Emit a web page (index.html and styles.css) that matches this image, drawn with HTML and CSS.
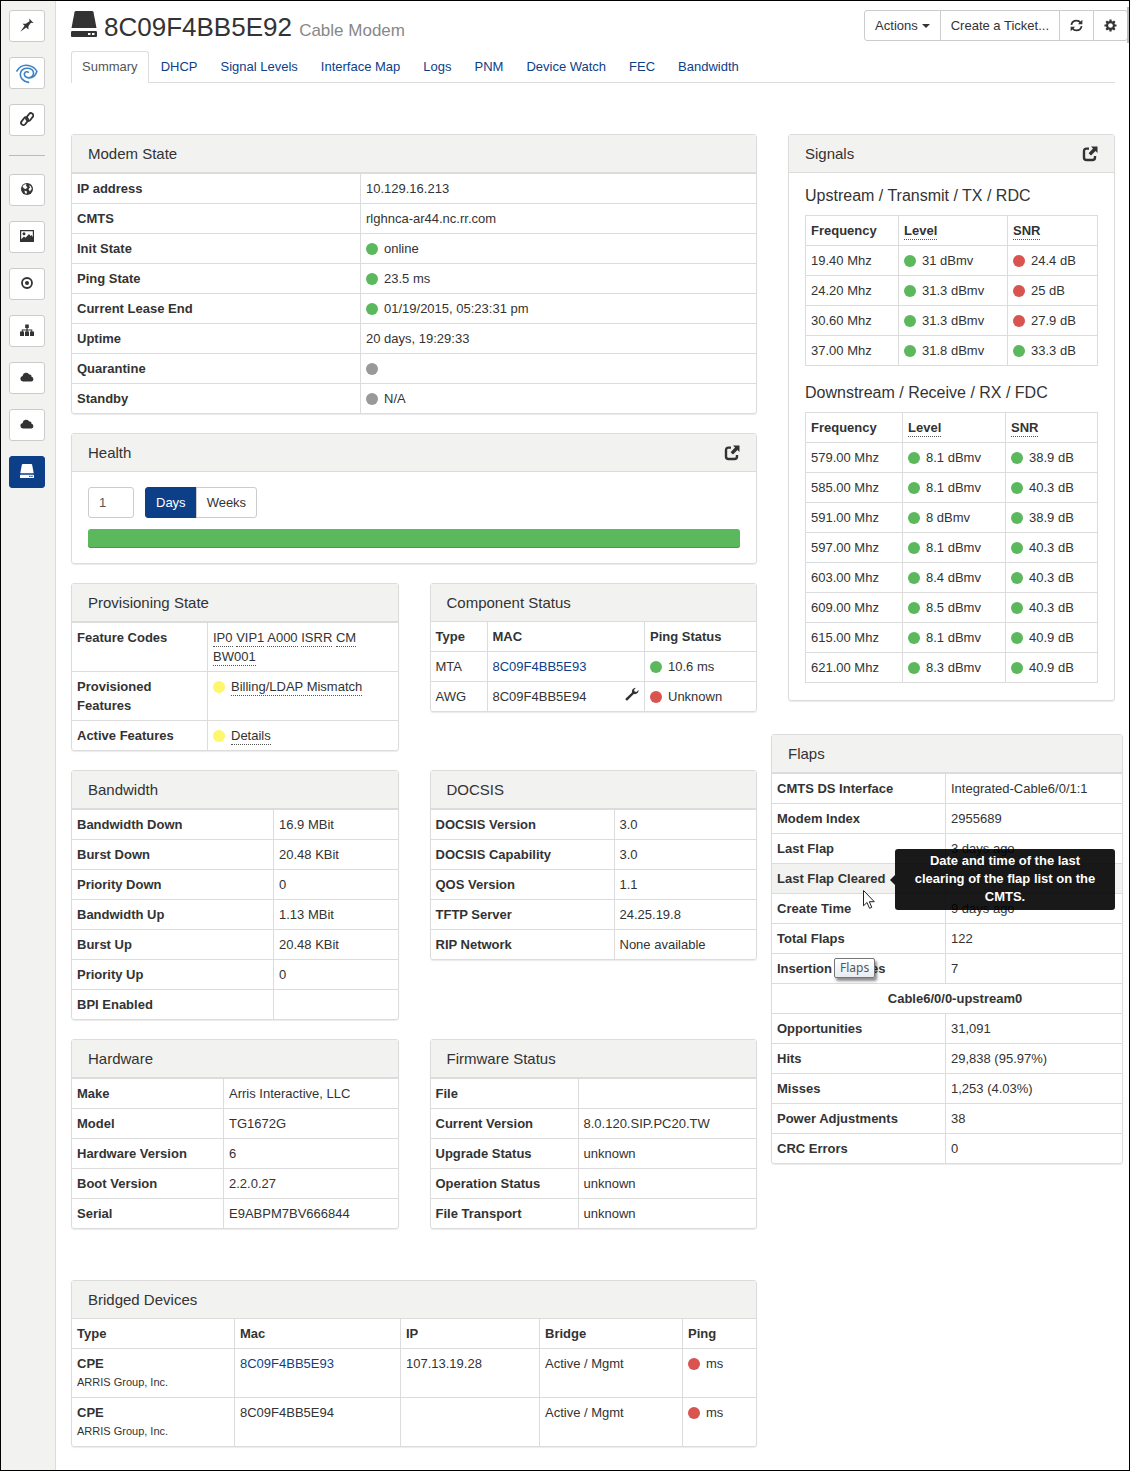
FILE: index.html
```html
<!DOCTYPE html>
<html lang="en">
<head>
<meta charset="utf-8">
<title>8C09F4BB5E92 - Cable Modem</title>
<link rel="stylesheet" href="styles.css">
</head>
<body>
<svg class="defs" aria-hidden="true">
  <symbol id="i-hdd" viewBox="0 0 26 26"><path d="M5 0h16q1.200 0 1.500 1.200L25.500 17H.5L3.500 1.200Q3.800 0 5 0z"/><path fill-rule="evenodd" d="M1.200 20h23.600q1.200 0 1.200 1.200V25q0 1-1 1H1q-1 0-1-1v-3.800Q0 20 1.200 20zM17 22v2h2.500v-2zM21 22v2h2.500v-2z"/></symbol>
  <symbol id="i-pin" viewBox="0 0 14 14"><path d="M.3 13.700L4.600 7.800 2.600 5.700h3.200L9.500 3.200 9.200.6l4.300 4.300-2.600-.2-2.500 3.500v3.200L6.200 9.400z"/></symbol>
  <symbol id="i-swirl" viewBox="0 0 22 20"><path fill="none" stroke="currentColor" stroke-width="1.600" stroke-linecap="round" d="M.9 7C4 1.800 9 .8 12.500 1.500 17 2.500 19.700 5 20.900 7.500 19.500 11.800 16 14.200 12.300 13.900M12.500 18.400C7 17.500 3.800 13.500 4.400 9.600 5 5.800 8.600 4.200 12 4.300c3.800.2 5.800 2.700 5.500 5.300-.4 2.900-3.200 4.500-5.800 4-2.600-.6-3.800-2.500-3.200-4.200.6-1.600 2.600-2.200 3.800-1.200"/></symbol>
  <symbol id="i-link" viewBox="0 0 14 14"><g fill="none" stroke="currentColor" stroke-width="1.800" transform="rotate(-52 7 7)"><rect x="-.5" y="4.200" width="8.500" height="4.600" rx="2.300"/><rect x="6" y="5.600" width="8.500" height="4.600" rx="2.300"/></g></symbol>
  <symbol id="i-globe" viewBox="0 0 14 14"><circle cx="7" cy="7" r="6"/><path fill="#fff" d="M2.500 4.500C3.500 2.800 5 2.200 6.500 2.300L6 4l1.500 1L6 7 4 6.500zM9 3l2 1.500.8 2.500-2 2.500L8.500 7 10 5.500zM4.500 8.500L7 9.500 6.500 12 5 11z"/></symbol>
  <symbol id="i-image" viewBox="0 0 14 14"><path fill-rule="evenodd" d="M0 1h14v12H0zM1.200 2.200v8L4 7.500l1.500 1.300L9 5l1.500 2 1-1L12.800 8V2.200zM4 3.300a1.500 1.500 0 1 1 0 3 1.500 1.500 0 0 1 0-3z"/></symbol>
  <symbol id="i-target" viewBox="0 0 14 14"><circle cx="7" cy="7" r="5" fill="none" stroke="currentColor" stroke-width="1.800"/><circle cx="7" cy="7" r="2"/></symbol>
  <symbol id="i-sitemap" viewBox="0 0 14 14"><path d="M5.200 1.500h3.600V5H7.600v1.500h4.700v2H14V13h-4V8.500h1.200v-1H7.600v1H9V13H5V8.500h1.400v-1H2.800v1H4V13H0V8.500h1.700v-2h4.700V5H5.200z"/></symbol>
  <symbol id="i-cloud" viewBox="0 0 14 14"><path d="M3 11.500a3 2.800 0 0 1-.4-5.500 3.600 3.600 0 0 1 6.700-1.400 2 2 0 0 1 2.200 2.200A2.400 2.400 0 0 1 11.500 11.500z"/></symbol>
  <symbol id="i-refresh" viewBox="0 0 14 14"><path fill="none" stroke="currentColor" stroke-width="1.900" d="M1.500 6.300C2 3.300 4.300 1.700 7 1.700c2 0 3.400.9 4.300 2.200M12.500 7.700c-.5 3-2.800 4.600-5.500 4.600-2 0-3.400-.9-4.300-2.200"/><path d="M13.300.8v4.900H8.500zM.7 13.200V8.300h4.800z"/></symbol>
  <symbol id="i-gear" viewBox="0 0 14 14"><circle cx="7" cy="7" r="3.700" fill="none" stroke="currentColor" stroke-width="2.300"/><path fill="none" stroke="currentColor" stroke-width="2.400" d="M7 .5V3M7 11v2.500M.5 7H3M11 7h2.500M2.400 2.400l1.800 1.800M9.800 9.800l1.800 1.800M11.600 2.400L9.800 4.200M4.200 9.800l-1.800 1.800"/></symbol>
  <symbol id="i-open" viewBox="0 0 16 16"><path fill="none" stroke="currentColor" stroke-width="2.400" d="M7 2.600H4.600Q2 2.600 2 5.200v6.200Q2 14 4.600 14h5.800Q13 14 13 11.400V10"/><path d="M9 .5h6.500V7l-2-2L9 9.600 6.600 7.200 11 2.600z"/></symbol>
  <symbol id="i-wrench" viewBox="0 0 14 14"><path d="M.7 11.400L7 5.600C6.500 3.400 8 .9 10.900.8L9 2.900l.6 1.700 1.800.4 2.200-1.900c.2 2.800-2.200 4.500-4.800 4L2.600 13.200C1.300 14 0 12.500.7 11.400z"/></symbol>
</svg>

<nav class="sidebar" aria-label="Shortcuts">
  <button class="side-btn" aria-label="Pin"><svg><use href="#i-pin"/></svg></button>
  <button class="side-btn side-btn-logo" aria-label="Home"><svg><use href="#i-swirl"/></svg></button>
  <button class="side-btn" aria-label="Links"><svg><use href="#i-link"/></svg></button>
  <hr class="side-rule">
  <button class="side-btn" aria-label="World"><svg><use href="#i-globe"/></svg></button>
  <button class="side-btn" aria-label="Images"><svg><use href="#i-image"/></svg></button>
  <button class="side-btn" aria-label="Target"><svg><use href="#i-target"/></svg></button>
  <button class="side-btn" aria-label="Topology"><svg><use href="#i-sitemap"/></svg></button>
  <button class="side-btn" aria-label="Cloud"><svg><use href="#i-cloud"/></svg></button>
  <button class="side-btn" aria-label="Cloud network"><svg><use href="#i-cloud"/></svg></button>
  <button class="side-btn side-btn-active" aria-label="Modem"><svg><use href="#i-hdd"/></svg></button>
</nav>

<main class="main">
  <header class="header">
    <svg class="title-icon"><use href="#i-hdd"/></svg>
    <h1 class="title">8C09F4BB5E92 <small>Cable Modem</small></h1>
    <div class="btn-group toolbar">
      <button class="btn">Actions <span class="caret"></span></button>
      <button class="btn">Create a Ticket...</button>
      <button class="btn" aria-label="Refresh"><svg><use href="#i-refresh"/></svg></button>
      <button class="btn" aria-label="Settings"><svg><use href="#i-gear"/></svg></button>
    </div>
  </header>

  <nav class="tabs" aria-label="Sections">
    <a class="tab tab-active" href="#">Summary</a>
    <a class="tab" href="#">DHCP</a>
    <a class="tab" href="#">Signal Levels</a>
    <a class="tab" href="#">Interface Map</a>
    <a class="tab" href="#">Logs</a>
    <a class="tab" href="#">PNM</a>
    <a class="tab" href="#">Device Watch</a>
    <a class="tab" href="#">FEC</a>
    <a class="tab" href="#">Bandwidth</a>
  </nav>

  <div class="content">
    <div class="left">
      <section class="panel wide">
        <h2 class="panel-title">Modem State</h2>
        <table class="data">
          <colgroup><col class="w-modem"><col></colgroup>
          <tr><th scope="row">IP address</th><td>10.129.16.213</td></tr>
          <tr><th scope="row">CMTS</th><td>rlghnca-ar44.nc.rr.com</td></tr>
          <tr><th scope="row">Init State</th><td><i class="dot green"></i>online</td></tr>
          <tr><th scope="row">Ping State</th><td><i class="dot green"></i>23.5 ms</td></tr>
          <tr><th scope="row">Current Lease End</th><td><i class="dot green"></i>01/19/2015, 05:23:31 pm</td></tr>
          <tr><th scope="row">Uptime</th><td>20 days, 19:29:33</td></tr>
          <tr><th scope="row">Quarantine</th><td><i class="dot gray"></i></td></tr>
          <tr><th scope="row">Standby</th><td><i class="dot gray"></i>N/A</td></tr>
        </table>
      </section>

      <section class="panel wide">
        <h2 class="panel-title">Health <a class="open" href="#" aria-label="Open health"><svg><use href="#i-open"/></svg></a></h2>
        <div class="health">
          <div class="controls">
            <input class="count" type="text" value="1" aria-label="Number of periods">
            <div class="btn-group">
              <button class="btn btn-primary">Days</button>
              <button class="btn">Weeks</button>
            </div>
          </div>
          <div class="progress"></div>
        </div>
      </section>

      <section class="panel">
        <h2 class="panel-title">Provisioning State</h2>
        <table class="data">
          <colgroup><col class="w-prov"><col></colgroup>
          <tr><th scope="row">Feature Codes</th><td><abbr>IP0</abbr> <abbr>VIP1</abbr> <abbr>A000</abbr> <abbr>ISRR</abbr> <abbr>CM</abbr> <abbr>BW001</abbr></td></tr>
          <tr><th scope="row">Provisioned Features</th><td><i class="dot yellow"></i><abbr>Billing/LDAP Mismatch</abbr></td></tr>
          <tr><th scope="row">Active Features</th><td><i class="dot yellow"></i><abbr>Details</abbr></td></tr>
        </table>
      </section>

      <section class="panel">
        <h2 class="panel-title">Component Status</h2>
        <table class="data headed">
          <colgroup><col class="w-type"><col><col class="w-status"></colgroup>
          <thead><tr><th>Type</th><th>MAC</th><th>Ping Status</th></tr></thead>
          <tbody>
            <tr><td>MTA</td><td><a href="#">8C09F4BB5E93</a></td><td><i class="dot green"></i>10.6 ms</td></tr>
            <tr><td>AWG</td><td>8C09F4BB5E94<svg class="wrench"><use href="#i-wrench"/></svg></td><td><i class="dot red"></i>Unknown</td></tr>
          </tbody>
        </table>
      </section>

      <section class="panel">
        <h2 class="panel-title">Bandwidth</h2>
        <table class="data">
          <colgroup><col class="w-band"><col></colgroup>
          <tr><th scope="row">Bandwidth Down</th><td>16.9 MBit</td></tr>
          <tr><th scope="row">Burst Down</th><td>20.48 KBit</td></tr>
          <tr><th scope="row">Priority Down</th><td>0</td></tr>
          <tr><th scope="row">Bandwidth Up</th><td>1.13 MBit</td></tr>
          <tr><th scope="row">Burst Up</th><td>20.48 KBit</td></tr>
          <tr><th scope="row">Priority Up</th><td>0</td></tr>
          <tr><th scope="row">BPI Enabled</th><td></td></tr>
        </table>
      </section>

      <section class="panel">
        <h2 class="panel-title">DOCSIS</h2>
        <table class="data">
          <colgroup><col class="w-docsis"><col></colgroup>
          <tr><th scope="row">DOCSIS Version</th><td>3.0</td></tr>
          <tr><th scope="row">DOCSIS Capability</th><td>3.0</td></tr>
          <tr><th scope="row">QOS Version</th><td>1.1</td></tr>
          <tr><th scope="row">TFTP Server</th><td>24.25.19.8</td></tr>
          <tr><th scope="row">RIP Network</th><td>None available</td></tr>
        </table>
      </section>

      <section class="panel">
        <h2 class="panel-title">Hardware</h2>
        <table class="data">
          <colgroup><col class="w-hard"><col></colgroup>
          <tr><th scope="row">Make</th><td>Arris Interactive, LLC</td></tr>
          <tr><th scope="row">Model</th><td>TG1672G</td></tr>
          <tr><th scope="row">Hardware Version</th><td>6</td></tr>
          <tr><th scope="row">Boot Version</th><td>2.2.0.27</td></tr>
          <tr><th scope="row">Serial</th><td>E9ABPM7BV666844</td></tr>
        </table>
      </section>

      <section class="panel">
        <h2 class="panel-title">Firmware Status</h2>
        <table class="data">
          <colgroup><col class="w-firm"><col></colgroup>
          <tr><th scope="row">File</th><td></td></tr>
          <tr><th scope="row">Current Version</th><td>8.0.120.SIP.PC20.TW</td></tr>
          <tr><th scope="row">Upgrade Status</th><td>unknown</td></tr>
          <tr><th scope="row">Operation Status</th><td>unknown</td></tr>
          <tr><th scope="row">File Transport</th><td>unknown</td></tr>
        </table>
      </section>

      <section class="panel wide bridged">
        <h2 class="panel-title">Bridged Devices</h2>
        <table class="data headed">
          <colgroup><col class="w-b1"><col><col class="w-b3"><col class="w-b4"><col class="w-b5"></colgroup>
          <thead><tr><th>Type</th><th>Mac</th><th>IP</th><th>Bridge</th><th>Ping</th></tr></thead>
          <tbody>
            <tr><th scope="row">CPE<small>ARRIS Group, Inc.</small></th><td><a href="#">8C09F4BB5E93</a></td><td>107.13.19.28</td><td>Active / Mgmt</td><td><i class="dot red"></i>ms</td></tr>
            <tr><th scope="row">CPE<small>ARRIS Group, Inc.</small></th><td>8C09F4BB5E94</td><td></td><td>Active / Mgmt</td><td><i class="dot red"></i>ms</td></tr>
          </tbody>
        </table>
      </section>
    </div>

    <div class="right">
      <section class="panel">
        <h2 class="panel-title">Signals <a class="open" href="#" aria-label="Open signals"><svg><use href="#i-open"/></svg></a></h2>
        <div class="signals">
          <h3 class="subtitle">Upstream / Transmit / TX / RDC</h3>
          <table class="data boxed">
            <colgroup><col class="w-freq-up"><col><col class="w-snr-up"></colgroup>
            <thead><tr><th>Frequency</th><th><abbr>Level</abbr></th><th><abbr>SNR</abbr></th></tr></thead>
            <tbody>
              <tr><td>19.40 Mhz</td><td><i class="dot green"></i>31 dBmv</td><td><i class="dot red"></i>24.4 dB</td></tr>
              <tr><td>24.20 Mhz</td><td><i class="dot green"></i>31.3 dBmv</td><td><i class="dot red"></i>25 dB</td></tr>
              <tr><td>30.60 Mhz</td><td><i class="dot green"></i>31.3 dBmv</td><td><i class="dot red"></i>27.9 dB</td></tr>
              <tr><td>37.00 Mhz</td><td><i class="dot green"></i>31.8 dBmv</td><td><i class="dot green"></i>33.3 dB</td></tr>
            </tbody>
          </table>
          <h3 class="subtitle">Downstream / Receive / RX / FDC</h3>
          <table class="data boxed">
            <colgroup><col class="w-freq-down"><col><col class="w-snr-down"></colgroup>
            <thead><tr><th>Frequency</th><th><abbr>Level</abbr></th><th><abbr>SNR</abbr></th></tr></thead>
            <tbody>
              <tr><td>579.00 Mhz</td><td><i class="dot green"></i>8.1 dBmv</td><td><i class="dot green"></i>38.9 dB</td></tr>
              <tr><td>585.00 Mhz</td><td><i class="dot green"></i>8.1 dBmv</td><td><i class="dot green"></i>40.3 dB</td></tr>
              <tr><td>591.00 Mhz</td><td><i class="dot green"></i>8 dBmv</td><td><i class="dot green"></i>38.9 dB</td></tr>
              <tr><td>597.00 Mhz</td><td><i class="dot green"></i>8.1 dBmv</td><td><i class="dot green"></i>40.3 dB</td></tr>
              <tr><td>603.00 Mhz</td><td><i class="dot green"></i>8.4 dBmv</td><td><i class="dot green"></i>40.3 dB</td></tr>
              <tr><td>609.00 Mhz</td><td><i class="dot green"></i>8.5 dBmv</td><td><i class="dot green"></i>40.3 dB</td></tr>
              <tr><td>615.00 Mhz</td><td><i class="dot green"></i>8.1 dBmv</td><td><i class="dot green"></i>40.9 dB</td></tr>
              <tr><td>621.00 Mhz</td><td><i class="dot green"></i>8.3 dBmv</td><td><i class="dot green"></i>40.9 dB</td></tr>
            </tbody>
          </table>
        </div>
      </section>

      <section class="panel flaps">
        <h2 class="panel-title">Flaps</h2>
        <table class="data">
          <colgroup><col class="w-flaps"><col></colgroup>
          <tr><th scope="row">CMTS DS Interface</th><td>Integrated-Cable6/0/1:1</td></tr>
          <tr><th scope="row">Modem Index</th><td>2955689</td></tr>
          <tr><th scope="row">Last Flap</th><td>3 days ago</td></tr>
          <tr class="hovered"><th scope="row">Last Flap Cleared
            <span class="tooltip" role="tooltip">Date and time of the last clearing of the flap list on the CMTS.</span>
            <svg class="cursor" viewBox="0 0 12 19"><path fill="#fff" stroke="#222" d="M.5.5v15.300l3.500-3.300 2.500 5.800 2.300-1-2.500-5.600h5z"/></svg>
          </th><td></td></tr>
          <tr><th scope="row">Create Time</th><td>9 days ago</td></tr>
          <tr><th scope="row">Total Flaps</th><td>122</td></tr>
          <tr class="hinted"><th scope="row">Insertion Failures<span class="hint">Flaps</span></th><td>7</td></tr>
          <tr><th class="group" colspan="2">Cable6/0/0-upstream0</th></tr>
          <tr><th scope="row">Opportunities</th><td>31,091</td></tr>
          <tr><th scope="row">Hits</th><td>29,838 (95.97%)</td></tr>
          <tr><th scope="row">Misses</th><td>1,253 (4.03%)</td></tr>
          <tr><th scope="row">Power Adjustments</th><td>38</td></tr>
          <tr><th scope="row">CRC Errors</th><td>0</td></tr>
        </table>
      </section>
    </div>
  </div>
</main>
<div class="scroll-thumb"></div>
</body>
</html>
```

FILE: styles.css
```css
* { box-sizing: border-box; }

body {
  margin: 0;
  min-height: 100vh;
  display: flex;
  position: relative;
  border: 1px solid #000;
  background: #fff;
  color: #333;
  font: 13px/19px "Liberation Sans", Arial, sans-serif;
}

a { color: #0d3f88; text-decoration: none; }
button, input { font: inherit; color: inherit; }
svg { fill: currentColor; }
.defs { position: absolute; width: 0; height: 0; }

/* Sidebar */
.sidebar {
  flex: none;
  width: 55px;
  padding: 9px 8px;
  display: flex;
  flex-direction: column;
  gap: 15px;
  background: #f2f2f0;
  border-right: 1px solid #dcdcdc;
}
.side-btn {
  width: 36px;
  height: 32px;
  padding: 0 0 3px;
  display: flex;
  align-items: center;
  justify-content: center;
  background: #fff;
  border: 1px solid #ccc;
  border-radius: 3px;
}
.side-btn svg { width: 14px; height: 14px; }
.side-btn-logo { padding: 2px 0 0; color: #3f83c3; }
.side-btn-logo svg { width: 22px; height: 20px; }
.side-btn-active { background: #0d3f88; border-color: #0d3f88; color: #fff; }
.side-rule {
  width: 36px;
  margin: 4px 0 3px;
  border: 0;
  border-top: 1px solid #bbb;
}

/* Header */
.main { flex: 1; min-width: 0; padding: 9px 14px 22px 15px; }
.header {
  display: flex;
  align-items: flex-start;
  height: 41px;
  margin-right: -13px;
}
.title-icon { width: 26px; height: 26px; margin: 1px 7px 0 0; flex: none; }
.title {
  margin: 0;
  flex: 1;
  font-size: 26px;
  line-height: 34px;
  font-weight: 400;
}
.title small { font-size: 17px; color: #888; }

.btn-group { display: flex; }
.btn {
  height: 31px;
  padding: 0 10px;
  display: flex;
  align-items: center;
  gap: 4px;
  background: #fff;
  border: 1px solid #ccc;
}
.btn + .btn { margin-left: -1px; }
.btn:first-child { border-radius: 3px 0 0 3px; }
.btn:last-child { border-radius: 0 3px 3px 0; }
.btn svg { width: 13px; height: 13px; }
.btn-primary { background: #0d3f88; border-color: #0d3f88; color: #fff; }
.caret {
  border: 4px solid transparent;
  border-top-color: currentColor;
  border-bottom: 0;
}

/* Tabs */
.tabs {
  display: flex;
  gap: 1px;
  margin-bottom: 51px;
  border-bottom: 1px solid #ddd;
}
.tab {
  padding: 5px 10px 6px;
  border: 1px solid transparent;
  border-bottom: 0;
  border-radius: 3px 3px 0 0;
}
.tab-active {
  margin-bottom: -1px;
  background: #fff;
  border-color: #ddd;
  color: #555;
}

/* Panels */
.content {
  display: grid;
  grid-template-columns: minmax(0, 686fr) minmax(0, 327fr);
  gap: 31px;
  align-items: start;
}
.left {
  display: grid;
  grid-template-columns: repeat(2, minmax(0, 1fr));
  gap: 19px 31px;
  align-items: start;
}
.wide { grid-column: 1 / -1; }
.panel {
  border: 1px solid #dcdcdc;
  border-radius: 3px;
  box-shadow: 0 1px 1px rgba(0, 0, 0, .08);
}
.panel-title {
  display: flex;
  align-items: center;
  justify-content: space-between;
  height: 38px;
  margin: 0;
  padding: 0 16px;
  background: #f2f2f0;
  border-bottom: 1px solid #dcdcdc;
  font-size: 15px;
  font-weight: 400;
}
.open { color: #333; height: 16px; }
.open svg { width: 16px; height: 16px; }
.bridged { margin-top: 32px; }

/* Tables */
.data { width: 100%; table-layout: fixed; border-collapse: separate; border-spacing: 0; }
.data th, .data td {
  height: 30px;
  padding: 5px;
  text-align: left;
  vertical-align: top;
  border-top: 1px solid #dcdcdc;
}
.data th + th, .data td + td, .data th + td { border-left: 1px solid #dcdcdc; }
.headed thead th { border-top: 0; height: 29px; }
.boxed { border: 1px solid #dcdcdc; border-top: 0; }
.data small { display: block; font-size: 11px; font-weight: 400; }
abbr { padding-bottom: 1px; border-bottom: 1px dotted #555; }

.dot {
  display: inline-block;
  width: 12px;
  height: 12px;
  margin-right: 6px;
  border-radius: 50%;
  vertical-align: -2px;
}
.green { background: #5cb85c; }
.red { background: #d9534f; }
.yellow { background: #fdf76b; }
.gray { background: #999; }
.wrench { float: right; width: 14px; height: 14px; }

.w-modem { width: 288px; }
.w-prov { width: 135px; }
.w-type { width: 56px; }
.w-status { width: 112px; }
.w-band { width: 201px; }
.w-docsis { width: 183px; }
.w-hard { width: 151px; }
.w-firm { width: 147px; }
.w-b1 { width: 162px; }
.w-b3 { width: 139px; }
.w-b4 { width: 143px; }
.w-b5 { width: 74px; }
.w-freq-up { width: 92px; }
.w-snr-up { width: 90px; }
.w-freq-down { width: 96px; }
.w-snr-down { width: 92px; }
.w-flaps { width: 173px; }

/* Health */
.health { padding: 15px 16px; }
.controls { display: flex; gap: 11px; margin-bottom: 11px; }
.count {
  width: 46px;
  height: 31px;
  padding: 0 10px;
  border: 1px solid #ccc;
  border-radius: 3px;
  color: #555;
}
.progress {
  height: 19px;
  border-radius: 3px;
  background: #5cb85c;
  box-shadow: inset 0 -1px 0 #4a9a4a;
}

/* Signals */
.signals { padding: 13px 16px 17px; }
.subtitle { margin: 0 0 9px; font-size: 16px; line-height: 20px; font-weight: 400; }
.boxed + .subtitle { margin-top: 17px; }

/* Flaps */
.flaps { margin: 33px -8px 0 -17px; }
.data .group { padding-left: 21px; text-align: center; }
.hovered { background: #f2f2f0; }
.hovered th, .hinted th { position: relative; }
.tooltip {
  position: absolute;
  z-index: 2;
  left: 123px;
  top: -15px;
  width: 220px;
  padding: 3px 16px 4px;
  border-radius: 3px;
  background: rgba(0, 0, 0, .9);
  color: #fff;
  line-height: 18px;
  text-align: center;
}
.tooltip::before {
  content: "";
  position: absolute;
  right: 100%;
  top: 50%;
  margin-top: -5px;
  border: 5px solid transparent;
  border-right-color: #1a1a1a;
  border-left: 0;
}
.cursor { position: absolute; z-index: 3; left: 91px; top: 26px; width: 12px; height: 19px; }
.hint {
  position: absolute;
  z-index: 2;
  left: 62px;
  top: 4px;
  height: 20px;
  padding: 0 5px;
  border: 1px solid #767676;
  border-radius: 2px;
  background: linear-gradient(#fff, #e8ecf2);
  box-shadow: 2px 3px 3px rgba(0, 0, 0, .45);
  color: #575757;
  font: 12px/18px "Noto Sans", sans-serif;
}

.scroll-thumb {
  position: absolute;
  right: -1px;
  top: 6px;
  width: 3px;
  height: 36px;
  background: #bcbcbc;
}
```
